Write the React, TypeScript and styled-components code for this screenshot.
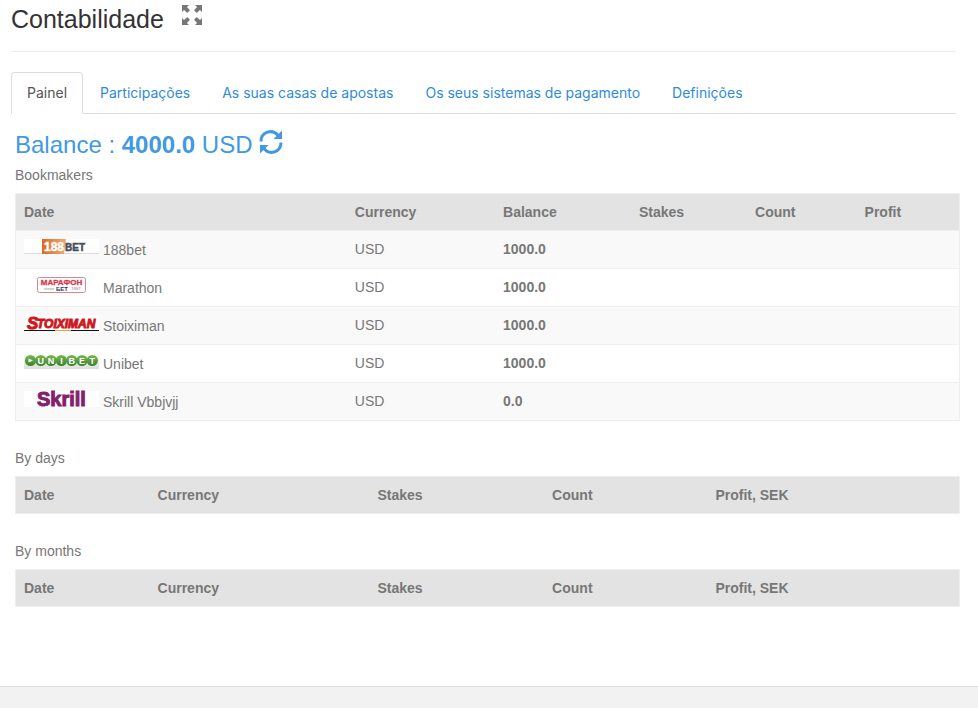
import React from "react";
import styled, { createGlobalStyle } from "styled-components";

const GlobalStyle = createGlobalStyle`
  *, *::before, *::after { box-sizing: border-box; }
  body {
    margin: 0;
    background: #fff;
    color: #777;
    font: 14px/20px "Liberation Sans", Arial, sans-serif;
  }
`;

const Page = styled.div`
  display: flex;
  flex-direction: column;
  min-height: 100vh;
`;

const Header = styled.header`
  display: flex;
  align-items: flex-start;
  gap: 18px;
  height: 52px;
  margin: 0 22px 20px 11px;
  border-bottom: 1px solid #eee;
`;

const Title = styled.h1`
  margin: 4px 0 0;
  color: #333;
  font: 400 25px/30px "Liberation Sans", Arial, sans-serif;
`;

const IconButton = styled.button`
  display: inline-flex;
  padding: 0;
  border: 0;
  background: none;
  color: inherit;
  cursor: pointer;
`;

const ExpandButton = styled(IconButton)`
  margin-top: 5px;
`;

const Tabs = styled.nav`
  display: flex;
  gap: 2px;
  margin: 0 22px 0 11px;
  border-bottom: 1px solid #ddd;
`;

const Tab = styled.a<{ $active?: boolean }>`
  height: 42px;
  margin-bottom: -1px;
  padding: 10px ${(p) => (p.$active ? 15 : 14)}px;
  border: 1px solid ${(p) => (p.$active ? "#ddd" : "transparent")};
  border-bottom-color: ${(p) => (p.$active ? "#fff" : "transparent")};
  border-radius: 4px 4px 0 0;
  background: ${(p) => (p.$active ? "#fff" : "transparent")};
  color: ${(p) => (p.$active ? "#555" : "#2f8bd9")};
  font: 400 14px/20px Inter, "Liberation Sans", sans-serif;
  text-decoration: none;
  white-space: nowrap;
`;

const Panel = styled.main`
  flex: 1;
  padding: 16px 18px 0 15px;
`;

const Balance = styled.h2`
  display: flex;
  align-items: flex-start;
  gap: 7px;
  height: 30px;
  margin: 0 0 5px;
  color: #4199e3;
  font-size: 24px;
  line-height: 30px;
  font-weight: 400;
`;

const Table = styled.table`
  width: 100%;
  margin-bottom: 27px;
  border: 1px solid #eee;
  border-collapse: collapse;
  table-layout: fixed;
`;

const Caption = styled.caption`
  height: 28px;
  text-align: left;
`;

const HeadCell = styled.th<{ $width: string }>`
  width: ${(p) => p.$width};
  height: 37px;
  padding: 0 8px;
  background: #e3e3e3;
  text-align: left;
`;

const Row = styled.tr`
  height: 38px;
  border-top: 1px solid #f0f0f0;
  &:nth-child(odd) { background: #f9f9f9; }
`;

const Cell = styled.td<{ $strong?: boolean }>`
  padding: 0 8px 2px;
  font-weight: ${(p) => (p.$strong ? 700 : 400)};
`;

const Bookmaker = styled.div`
  display: flex;
  align-items: flex-end;
  gap: 4px;
`;

const LogoSvg = styled.svg`
  flex: none;
  margin-bottom: 4px;
  overflow: visible;
`;

const Footer = styled.footer`
  height: 22px;
  border-top: 1px solid #e0e0e0;
  background: #f2f2f2;
`;

const SANS = '"Liberation Sans", Arial, sans-serif';

function ExpandIcon() {
  const arrow = "M0 0H7L4.9 2.1L8 5.2L5.2 8L2.1 4.9L0 7Z";
  return (
    <svg width="20" height="20" viewBox="0 0 20 20" fill="#777" aria-hidden="true">
      <path d={arrow} />
      <path d={arrow} transform="translate(20 0) rotate(90)" />
      <path d={arrow} transform="translate(20 20) rotate(180)" />
      <path d={arrow} transform="translate(0 20) rotate(270)" />
    </svg>
  );
}

function RefreshIcon() {
  return (
    <svg width="24" height="24" viewBox="0 0 24 24" aria-hidden="true">
      <g fill="none" stroke="currentColor" strokeWidth="3">
        <path d="M2 11.5C2 1.5 13.5-1.5 19.2 5.6" />
        <path d="M22 12.5C22 22.5 10.5 25.5 4.8 18.4" />
      </g>
      <path fill="currentColor" d="M23 .5V9H14.5ZM1 23.5V15H9.5Z" />
    </svg>
  );
}

function Logo188() {
  return (
    <>
      <defs>
        <linearGradient id="bet-orange" x2="1">
          <stop stopColor="#d96b25" />
          <stop offset="1" stopColor="#efab78" />
        </linearGradient>
      </defs>
      <path fill="#fff" d="M0 1h75v15H0z" />
      <path fill="#ddd" d="M0 15h75v1H0z" />
      <path fill="url(#bet-orange)" d="M18 1h24l-2 15H18z" />
      <g fontFamily={SANS} fontWeight="700">
        <text x="20" y="13" fontSize="12" fill="#fff" stroke="#fff" strokeWidth=".4">188</text>
        <text x="41" y="13" fontSize="10" fill="#46505b" stroke="#46505b" strokeWidth=".5">BET</text>
      </g>
    </>
  );
}

function LogoMarathon() {
  return (
    <>
      <rect x="13.5" y="1.5" width="48" height="15" rx="2" fill="#fff" stroke="#dc8790" />
      <g fontFamily={SANS} fontWeight="700" textAnchor="middle">
        <text x="37.5" y="9" fontSize="8" fill="#d2384a" stroke="#d2384a" strokeWidth=".3">МАРАФОН</text>
        <text x="38" y="15" fontSize="6" fill="#35384a">БЕТ</text>
        <text x="25" y="14" fontSize="4" fill="#aaa">since</text>
        <text x="52" y="14" fontSize="4" fill="#aaa">1997</text>
      </g>
    </>
  );
}

function LogoStoiximan() {
  return (
    <>
      <path fill="#fff" d="M0 1h75v15H0z" />
      <path fill="#111" d="M0 16h75v1H0z" />
      <path fill="#d9a53d" d="M31 16h16v1H31z" />
      <g fontFamily={SANS} fontWeight="700" fontStyle="italic" fill="#cf1820" stroke="#cf1820" strokeWidth="1">
        <text x="3" y="15" fontSize="17">S</text>
        <text x="13" y="14" fontSize="12">TOIXIMAN</text>
      </g>
    </>
  );
}

function LogoUnibet() {
  return (
    <>
      <defs>
        <linearGradient id="unibet-ball" x2="0" y2="1">
          <stop stopColor="#7db950" />
          <stop offset="1" stopColor="#34832a" />
        </linearGradient>
        <linearGradient id="unibet-back" x2="0" y2="1">
          <stop stopColor="#fff" />
          <stop offset="1" stopColor="#ddd" />
        </linearGradient>
      </defs>
      <path fill="url(#unibet-back)" d="M0 1h75v16H0z" />
      {["", "U", "N", "I", "B", "E", "T"].map((letter, i) => (
        <g key={i}>
          <circle cx={6.5 + i * 10.3} cy="8.5" r="5.6" fill="url(#unibet-ball)" />
          <text x={6.5 + i * 10.3} y="11.5" fill="#fff" fontFamily={SANS} fontSize="9" fontWeight="700" textAnchor="middle">
            {letter}
          </text>
        </g>
      ))}
      <path fill="#fff" d="M4.5 6.5l4.5 2L4.5 10.5z" />
    </>
  );
}

function LogoSkrill() {
  return (
    <>
      <path fill="#fff" d="M0 1h75v16H0z" />
      <text x="13" y="16" fill="#84216b" stroke="#84216b" strokeWidth="1" fontFamily={SANS} fontSize="20" fontWeight="700">
        Skrill
      </text>
    </>
  );
}

const tabs = ["Painel", "Participações", "As suas casas de apostas", "Os seus sistemas de pagamento", "Definições"];

const bookmakers = [
  { name: "188bet", balance: "1000.0", Logo: Logo188 },
  { name: "Marathon", balance: "1000.0", Logo: LogoMarathon },
  { name: "Stoiximan", balance: "1000.0", Logo: LogoStoiximan },
  { name: "Unibet", balance: "1000.0", Logo: LogoUnibet },
  { name: "Skrill Vbbjvjj", balance: "0.0", Logo: LogoSkrill },
];

type Column = [label: string, width: string];

const bookmakerColumns: Column[] = [
  ["Date", "35.1%"],
  ["Currency", "15.7%"],
  ["Balance", "14.4%"],
  ["Stakes", "12.3%"],
  ["Count", "11.6%"],
  ["Profit", "10.9%"],
];

const periodColumns: Column[] = [
  ["Date", "14.2%"],
  ["Currency", "23.3%"],
  ["Stakes", "18.5%"],
  ["Count", "17.3%"],
  ["Profit, SEK", "26.7%"],
];

function DataTable({ title, columns, children }: { title: string; columns: Column[]; children?: React.ReactNode }) {
  return (
    <Table>
      <Caption>{title}</Caption>
      <thead>
        <tr>
          {columns.map(([label, width]) => (
            <HeadCell key={label} scope="col" $width={width}>{label}</HeadCell>
          ))}
        </tr>
      </thead>
      {children && <tbody>{children}</tbody>}
    </Table>
  );
}

export default function App() {
  return (
    <Page>
      <GlobalStyle />
      <Header>
        <Title>Contabilidade</Title>
        <ExpandButton type="button" aria-label="Expandir"><ExpandIcon /></ExpandButton>
      </Header>
      <Tabs>
        {tabs.map((tab, i) => (
          <Tab key={tab} href="#" $active={i === 0} aria-current={i === 0 ? "page" : undefined}>{tab}</Tab>
        ))}
      </Tabs>
      <Panel>
        <Balance>
          <span>Balance : <strong>4000.0</strong> USD</span>
          <IconButton type="button" aria-label="Atualizar"><RefreshIcon /></IconButton>
        </Balance>
        <DataTable title="Bookmakers" columns={bookmakerColumns}>
          {bookmakers.map(({ name, balance, Logo }) => (
            <Row key={name}>
              <Cell>
                <Bookmaker>
                  <LogoSvg width="75" height="18" viewBox="0 0 75 18" aria-hidden="true"><Logo /></LogoSvg>
                  <span>{name}</span>
                </Bookmaker>
              </Cell>
              <Cell>USD</Cell>
              <Cell $strong>{balance}</Cell>
              <Cell />
              <Cell />
              <Cell />
            </Row>
          ))}
        </DataTable>
        <DataTable title="By days" columns={periodColumns} />
        <DataTable title="By months" columns={periodColumns} />
      </Panel>
      <Footer />
    </Page>
  );
}
